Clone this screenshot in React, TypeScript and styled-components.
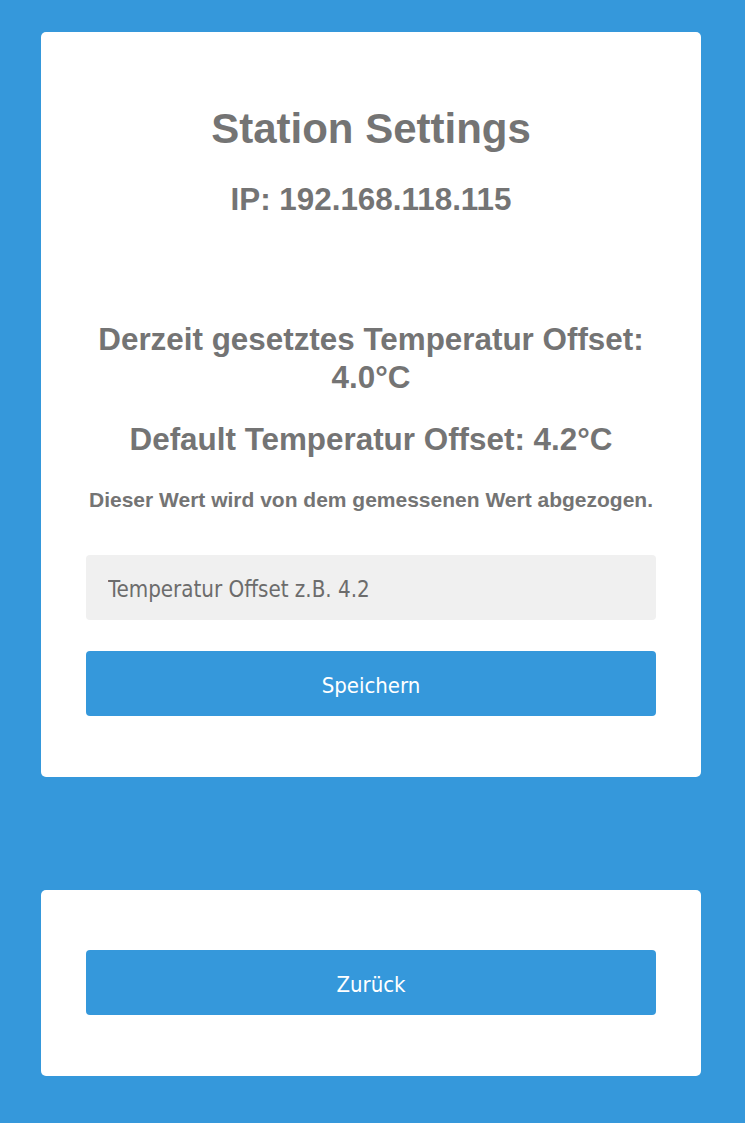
import React, { FC } from "react";
import styled, { createGlobalStyle } from "styled-components";

const GlobalStyle = createGlobalStyle`
  html, body {
    margin: 0;
    padding: 0;
    background: #3598db;
  }
  body {
    font-family: "Liberation Sans", Arial, sans-serif;
  }
`;

const Page = styled.div`
  display: flex;
  flex-direction: column;
  padding: 32px 0 47px 41px;
  gap: 113px;
`;

const Card = styled.div<{ $top: number; $bottom: number }>`
  width: 660px;
  box-sizing: border-box;
  background: #fff;
  border-radius: 5px;
  padding: ${(p) => p.$top}px 45px ${(p) => p.$bottom}px;
  display: flex;
  flex-direction: column;
  align-items: stretch;
  text-align: center;
  color: #747474;
`;

const Title = styled.h1`
  margin: 0;
  font-size: 42px;
  line-height: 48px;
  font-weight: bold;
`;

const Heading = styled.h2<{ $gap: number; $lh?: number }>`
  margin: ${(p) => p.$gap}px 0 0;
  font-size: 31.4px;
  line-height: ${(p) => p.$lh ?? 38}px;
  font-weight: bold;
`;

const Note = styled.p`
  margin: 29px 0 0;
  font-size: 21px;
  line-height: 24px;
  font-weight: bold;
`;

const uiFont = `"DejaVu Sans Condensed", "DejaVu Sans", sans-serif`;

const Input = styled.input`
  margin-top: 43px;
  height: 65px;
  box-sizing: border-box;
  border: none;
  outline: none;
  border-radius: 4px;
  background: #f0f0f0;
  padding: 2px 22px 0;
  font-family: ${uiFont};
  font-stretch: condensed;
  font-size: 22.2px;
  color: #6c6c6c;
  &::placeholder {
    color: #6c6c6c;
    opacity: 1;
  }
`;

const Button = styled.button<{ $gap: number }>`
  margin-top: ${(p) => p.$gap}px;
  height: 65px;
  padding: 3px 0 0;
  border: none;
  border-radius: 4px;
  background: #3598db;
  color: #fff;
  font-family: ${uiFont};
  font-stretch: condensed;
  font-size: 22px;
  cursor: pointer;
`;

const App: FC = () => {
  return (
    <>
      <GlobalStyle />
      <Page>
        <Card $top={73} $bottom={61}>
          <Title>Station Settings</Title>
          <Heading $gap={29} $lh={36}>
            IP: 192.168.118.115
          </Heading>
          <Heading $gap={103}>Derzeit gesetztes Temperatur Offset: 4.0°C</Heading>
          <Heading $gap={24}>Default Temperatur Offset: 4.2°C</Heading>
          <Note>Dieser Wert wird von dem gemessenen Wert abgezogen.</Note>
          <Input type="text" placeholder="Temperatur Offset z.B. 4.2" />
          <Button $gap={31}>Speichern</Button>
        </Card>
        <Card $top={60} $bottom={61}>
          <Button $gap={0}>Zurück</Button>
        </Card>
      </Page>
    </>
  );
};

export default App;
